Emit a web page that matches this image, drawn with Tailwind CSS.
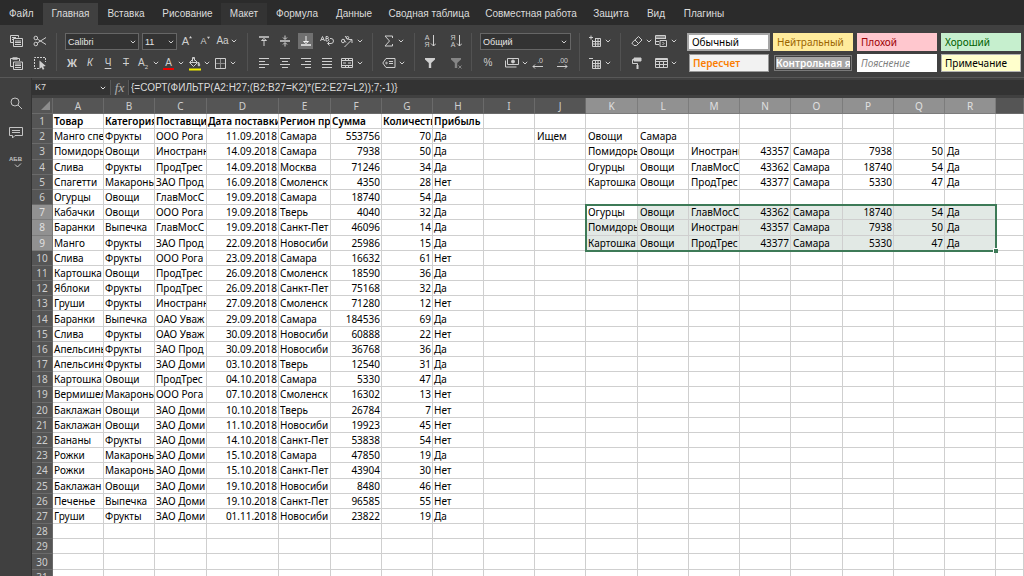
<!DOCTYPE html>
<html lang="ru">
<head>
<meta charset="utf-8">
<meta name="viewport" content="width=device-width, initial-scale=1">
<title>Редактор таблиц</title>
<script src="https://cdn.jsdelivr.net/npm/@tailwindcss/browser@4"></script>
</head>
<body class="flex h-screen flex-col overflow-hidden bg-[#404040] font-['Liberation_Sans',Arial,sans-serif] text-[#dcdcdc]">

<svg class="hidden" aria-hidden="true">
  <symbol id="chev" viewBox="0 0 6 6"><path d="M.8 1.800 3 4l2.200-2.200" fill="none" stroke="currentColor"/></symbol>
</svg>

<nav class="flex h-[25px] shrink-0 items-stretch bg-[#2b2b2b] pt-[3px] text-[10px] leading-[21px] whitespace-nowrap" aria-label="Вкладки">
  <a href="#" class="w-[43px] pl-[9px]">Файл</a>
  <a href="#" aria-current="page" class="w-[55px] bg-[#404040] text-center">Главная</a>
  <a href="#" class="w-[56px] text-center">Вставка</a>
  <a href="#" class="w-[67px] text-center">Рисование</a>
  <a href="#" class="w-[46px] bg-[#333333] text-center">Макет</a>
  <a href="#" class="w-[60px] text-center">Формула</a>
  <a href="#" class="w-[54px] text-center">Данные</a>
  <a href="#" class="w-[96px] text-center">Сводная таблица</a>
  <a href="#" class="w-[108px] text-center">Совместная работа</a>
  <a href="#" class="w-[52px] text-center">Защита</a>
  <a href="#" class="w-[38px] text-center">Вид</a>
  <a href="#" class="w-[58px] text-center">Плагины</a>
</nav>

<div role="toolbar" aria-label="Главная" class="flex h-[53px] shrink-0 border-b border-[#585858] pt-2 text-[#cfcfcf]">
  <!-- clipboard -->
  <div class="ml-1 grid h-[38px] w-[53px] shrink-0 grid-cols-[24px_24px] grid-rows-2 gap-y-[6px] border-r border-[#525252]">
    <button aria-label="Копировать" class="flex items-center justify-center"><svg class="h-[12px] w-[13px]" viewBox="0 0 13 12" fill="none" stroke="currentColor"><path d="M.5.5h8v2M.5.5v7H3M2 2.500h4M2 4.500h1"/><path d="M3.500 3.500h9v8h-9zM5 6h6M5 7.500h6M5 9.500h6"/></svg></button>
    <button aria-label="Вырезать" class="flex items-center justify-center"><svg class="size-[14px]" viewBox="0 0 14 14" fill="none" stroke="currentColor"><circle cx="2.800" cy="4" r="1.800"/><circle cx="2.800" cy="10" r="1.800"/><path d="M4.300 5 13 10.500M4.300 9 13 3.500"/></svg></button>
    <button aria-label="Вставить" class="flex items-center justify-center"><svg class="h-[13px] w-[13px]" viewBox="0 0 13 13" fill="none" stroke="currentColor"><path d="M3.500 9.500h-3v-8h9V4"/><path d="M2.500 1.500h5" stroke-width="2.500"/><path d="M3.500 5h9v7.500h-9zM5 7h6M5 8.500h6M5 10.500h6"/></svg></button>
    <button aria-label="Выделить все" class="flex items-center justify-center"><svg class="size-[14px]" viewBox="0 0 14 14" fill="none" stroke="currentColor"><path d="M6 12.500H1.500v-11h11V6" stroke-dasharray="2 1"/><path d="M6.500 4.500v8.500l2-1.800 1.300 2.600 1.600-.8-1.300-2.600 2.700-.3z" fill="currentColor" stroke="none"/></svg></button>
  </div>
  <!-- font -->
  <div class="flex h-[38px] w-[191px] shrink-0 flex-col gap-[6px] border-r border-[#525252] pl-[6px]">
    <div class="flex h-[16px]">
      <label class="relative ml-[2px] block w-[74px]"><select aria-label="Шрифт" class="block h-[17px] w-full appearance-none border border-[#666] bg-[#333] pl-[2px] text-[9px] leading-[14px] text-[#e6e6e6]"><option>Calibri</option></select><svg class="pointer-events-none absolute top-[6px] right-[3px] size-[6px]"><use href="#chev"/></svg></label>
      <label class="relative ml-[3px] block w-[35px]"><select aria-label="Размер шрифта" class="block h-[17px] w-full appearance-none border border-[#666] bg-[#333] pl-[2px] text-[9px] leading-[14px] text-[#e6e6e6]"><option>11</option></select><svg class="pointer-events-none absolute top-[6px] right-[3px] size-[6px]"><use href="#chev"/></svg></label>
      <button aria-label="Увеличить размер шрифта" class="ml-px flex w-[18px] items-center justify-center"><span class="text-[11px] leading-[16px]">A</span><svg class="mb-[8px] size-[3px]" viewBox="0 0 4 4"><path d="M0 3 2 0l2 3z" fill="currentColor"/></svg></button>
      <button aria-label="Уменьшить размер шрифта" class="flex w-[18px] items-center justify-center"><span class="text-[9px] leading-[16px]">A</span><svg class="mb-[8px] size-[3px]" viewBox="0 0 4 4"><path d="M0 1l2 3 2-3z" fill="currentColor"/></svg></button>
      <button aria-label="Изменить регистр" class="ml-px flex w-[24px] items-center gap-px text-[10px] leading-[16px]"><span class="w-[15px]">Aa</span><svg class="size-[6px]"><use href="#chev"/></svg></button>
    </div>
    <div class="flex h-[16px] items-center text-[10px] leading-[16px]">
      <button aria-label="Полужирный" class="w-[18px] text-center text-[11px] font-bold">Ж</button>
      <button aria-label="Курсив" class="w-[18px] text-center italic">К</button>
      <button aria-label="Подчеркнутый" class="w-[18px] text-center underline underline-offset-2">Ч</button>
      <button aria-label="Зачеркнутый" class="w-[18px] text-center line-through">Т</button>
      <button aria-label="Подстрочные знаки" class="ml-[3px] flex w-[24px] items-center gap-px"><span class="flex w-[14px] items-end">A<span class="text-[6px] leading-[8px]">2</span></span><svg class="size-[6px]"><use href="#chev"/></svg></button>
      <button aria-label="Цвет шрифта" class="ml-px flex w-[25px] items-center gap-[4px]"><span class="block h-[14px] w-[11px] border-b-2 border-[#f00000] text-center leading-[13px]">A</span><svg class="size-[6px]"><use href="#chev"/></svg></button>
      <button aria-label="Цвет заливки" class="flex w-[25px] items-center gap-[3px]"><svg class="h-[15px] w-[13px]" viewBox="0 0 13 15" fill="none" stroke="currentColor"><path d="M5.500 2.500 9.500 6.500 5.500 10.500 1.500 6.500zM2 6.500h7M4.500 5.500v-4h2v3"/><path d="M10.500 6c1.500 2.500 1.500 4 .5 4s-1-1-.5-4z" fill="currentColor"/><path d="M1 13.500h12" stroke="#f4f000" stroke-width="2"/></svg><svg class="size-[6px]"><use href="#chev"/></svg></button>
      <button aria-label="Границы" class="ml-[2px] flex w-[24px] items-center gap-[4px]"><svg class="size-[11px]" viewBox="0 0 11 11" fill="none"><path d="M.5.5h10v10H.500z" stroke="currentColor"/><path d="M5.500 1v9M1 5.500h9" stroke="#8c8c8c"/></svg><svg class="size-[6px]"><use href="#chev"/></svg></button>
    </div>
  </div>
  <!-- alignment -->
  <div class="grid h-[38px] w-[125px] shrink-0 grid-cols-[21px_21px_21px_21px_28px] grid-rows-2 gap-y-[6px] border-r border-[#525252] pl-[5px]">
    <button aria-label="По верхнему краю" class="flex items-center justify-center"><svg class="size-[10px]" viewBox="0 0 10 10" fill="none" stroke="currentColor"><path d="M0 1h10" stroke-width="1.500"/><path d="M2.500 4.500 5 2.500l2.500 2zM5 4v6"/></svg></button>
    <button aria-label="По середине" class="flex items-center justify-center"><svg class="size-[12px]" viewBox="0 0 12 12" fill="none" stroke="currentColor"><path d="M1 6h10" stroke-width="1.500"/><path d="M6 .5V4M6 8v3.500M4 2.500l2 2 2-2M4 9.500l2-2 2 2"/></svg></button>
    <button aria-label="По нижнему краю" aria-pressed="true" class="mx-[3px] flex items-center justify-center bg-[#707070] text-[#f0f0f0]"><svg class="size-[10px]" viewBox="0 0 10 10" fill="none" stroke="currentColor"><path d="M0 9h10" stroke-width="1.500"/><path d="M2.500 5.500 5 7.500l2.500-2zM5 0v6"/></svg></button>
    <button aria-label="Перенос текста" class="flex items-center justify-center"><svg class="size-[14px]" viewBox="0 0 14 14" fill="none" stroke="currentColor"><path d="M.5 7 2.500 2.500 4.500 7M1.200 5.500h2.600M6 2.500V7h1.500a1 1 0 0 0 0-2.500H6h1.300a.9.900 0 0 0 0-2zM10 4.500h1a2.500 2.500 0 0 1 0 5H8M9.500 7.500l-2 2 2 2"/></svg></button>
    <button aria-label="Ориентация" class="flex items-center gap-[4px] pl-[3px]"><svg class="size-[13px]" viewBox="0 0 13 13" fill="none" stroke="currentColor"><path d="m4.500 12 7-7M8.500 4.500H12V8"/><ellipse cx="3" cy="6" rx="1.500" ry="1.800"/><path d="m3.500 4 2.500 3.500M5 1l3 3.500"/><circle cx="7.500" cy="2.800" r="1.300"/></svg><svg class="size-[6px]"><use href="#chev"/></svg></button>
    <button aria-label="По левому краю" class="flex items-center justify-center"><svg class="size-[10px]" viewBox="0 0 10 10" stroke="currentColor"><path d="M0 .5h10M0 3.500h6M0 6.500h10M0 9.500h6"/></svg></button>
    <button aria-label="По центру" class="flex items-center justify-center"><svg class="size-[10px]" viewBox="0 0 10 10" stroke="currentColor"><path d="M0 .5h10M2 3.500h6M0 6.500h10M2 9.500h6"/></svg></button>
    <button aria-label="По правому краю" class="flex items-center justify-center"><svg class="size-[10px]" viewBox="0 0 10 10" stroke="currentColor"><path d="M0 .5h10M4 3.500h6M0 6.500h10M4 9.500h6"/></svg></button>
    <button aria-label="По ширине" class="flex items-center justify-center"><svg class="size-[10px]" viewBox="0 0 10 10" stroke="currentColor"><path d="M0 .5h10M0 3.500h10M0 6.500h10M0 9.500h10"/></svg></button>
    <button aria-label="Объединить ячейки" class="flex items-center gap-[4px] pl-[4px]"><svg class="h-[10px] w-[12px]" viewBox="0 0 12 10" fill="none" stroke="currentColor"><path d="M.5.5h11v9H.500zM.5 2.500h11M.5 7.500h11M4.500.5v2M7.500.5v2M4.500 7.500v2M7.500 7.500v2M2 5h3M7 5h3"/></svg><svg class="size-[6px]"><use href="#chev"/></svg></button>
  </div>
  <!-- functions -->
  <div class="grid h-[38px] w-[42px] shrink-0 grid-rows-2 gap-y-[6px] border-r border-[#525252] pl-[9px]">
    <button aria-label="Сумма" class="flex items-center gap-[3px]"><svg class="h-[12px] w-[13px]" viewBox="0 0 13 12" fill="none" stroke="currentColor"><path d="M10.500 3V1H3l4.500 5L3 11h7.500V9"/></svg><svg class="size-[6px]"><use href="#chev"/></svg></button>
    <button aria-label="Именованные диапазоны" class="flex items-center gap-[3px]"><svg class="h-[10px] w-[14px]" viewBox="0 0 14 10" fill="none" stroke="currentColor"><path d="M4 .5h9v9H4L.8 5zM7 3.500h4M7 5.500h4"/><circle cx="4.500" cy="5" r=".8"/></svg><svg class="size-[6px]"><use href="#chev"/></svg></button>
  </div>
  <!-- sorting -->
  <div class="grid h-[38px] w-[57px] shrink-0 grid-cols-[26px_26px] grid-rows-2 gap-y-[6px] border-r border-[#525252] pl-[2px]">
    <button aria-label="Сортировка по возрастанию" class="flex items-center justify-center"><span class="flex w-[6px] flex-col text-[7px] leading-[7px]"><span>А</span><span>Я</span></span><svg class="h-[14px] w-[6px]" viewBox="0 0 6 14" fill="none" stroke="currentColor"><path d="M3.500 1v11M1 9.500 3.500 12 6 9.500"/></svg></button>
    <button aria-label="Сортировка по убыванию" class="flex items-center justify-center"><span class="flex w-[6px] flex-col text-[7px] leading-[7px]"><span>Я</span><span>А</span></span><svg class="h-[14px] w-[6px]" viewBox="0 0 6 14" fill="none" stroke="currentColor"><path d="M3.500 1v11M1 9.500 3.500 12 6 9.500"/></svg></button>
    <button aria-label="Фильтр" class="flex items-center justify-center"><svg class="size-[10px]" viewBox="0 0 10 10" fill="currentColor"><path d="M0 0h10v1.500L6.200 5v5H3.800V5L0 1.500z"/></svg></button>
    <button aria-label="Очистить фильтр" class="flex items-center justify-center text-[#858585]"><svg class="size-[11px]" viewBox="0 0 11 11" fill="currentColor"><path d="M0 0h10v1.500L6.200 5v5H3.800V5L0 1.500z"/><path d="m7.500 7.500 3 3m0-3-3 3" stroke="currentColor"/></svg></button>
  </div>
  <!-- number format -->
  <div class="flex h-[38px] w-[108px] shrink-0 flex-col gap-[6px] border-r border-[#525252] pl-[3px]">
    <label class="relative ml-[5px] block h-[16px] w-[91px]"><select aria-label="Числовой формат" class="block h-[17px] w-full appearance-none border border-[#666] bg-[#333] pl-[2px] text-[9px] leading-[14px] text-[#e6e6e6]"><option>Общий</option></select><svg class="pointer-events-none absolute top-[6px] right-[4px] size-[6px]"><use href="#chev"/></svg></label>
    <div class="flex h-[16px] items-center">
      <button aria-label="Процентный формат" class="w-[26px] text-center text-[10px] leading-[16px]">%</button>
      <button aria-label="Финансовый формат" class="ml-[4px] flex w-[25px] items-center gap-[3px]"><svg class="h-[10px] w-[14px]" viewBox="0 0 14 10" fill="none" stroke="currentColor"><path d="M2.500.5h11v6h-11zM.5 2.500v6.500h11"/><circle cx="8" cy="3.500" r="1.500" fill="currentColor"/></svg><svg class="size-[6px]"><use href="#chev"/></svg></button>
      <button aria-label="Уменьшить разрядность" class="flex w-[13px] flex-col items-end"><span class="text-[7px] leading-[7px]">.0</span><svg class="h-[5px] w-[11px]" viewBox="0 0 11 5" fill="none" stroke="currentColor"><path d="M1 2.500h10M3 .5l-2 2 2 2"/></svg></button>
      <button aria-label="Увеличить разрядность" class="ml-[8px] flex w-[17px] flex-col items-end"><span class="text-[7px] leading-[7px]">.00</span><svg class="h-[5px] w-[11px]" viewBox="0 0 11 5" fill="none" stroke="currentColor"><path d="M0 2.500h10M8 .5l2 2-2 2"/></svg></button>
    </div>
  </div>
  <!-- cells -->
  <div class="grid h-[38px] w-[41px] shrink-0 grid-rows-2 gap-y-[6px] border-r border-[#525252] pl-[9px]">
    <button aria-label="Вставить ячейки" class="flex items-center gap-[4px]"><svg class="size-[12px]" viewBox="0 0 12 12" fill="none" stroke="currentColor"><path d="M0 2.500h4M2 .5v4M3.500 5v6.500h8v-8H6M3.500 6.500h8M3.500 9h8M6.500 3.500v8M9 3.500v8"/></svg><svg class="size-[6px]"><use href="#chev"/></svg></button>
    <button aria-label="Удалить ячейки" class="flex items-center gap-[4px]"><svg class="size-[12px]" viewBox="0 0 12 12" fill="none" stroke="currentColor"><path d="M0 1.500h4M3.500 4v7.500h8v-8h-8M3.500 6.500h8M3.500 9h8M6.500 3.500v8M9 3.500v8"/></svg><svg class="size-[6px]"><use href="#chev"/></svg></button>
  </div>
  <!-- editing -->
  <div class="grid h-[38px] w-[66px] shrink-0 grid-cols-[24px_24px] grid-rows-2 gap-y-[6px] pl-[10px]">
    <button aria-label="Очистить" class="flex items-center gap-[3px]"><svg class="h-[12px] w-[12px]" viewBox="0 0 12 12" fill="none" stroke="currentColor"><path d="M7.500 1.500 11 5 5.500 10.500H3L.8 8zM4 5l3.500 3.500"/></svg><svg class="size-[6px]"><use href="#chev"/></svg></button>
    <button aria-label="Условное форматирование" class="flex items-center gap-[4px]"><svg class="size-[12px] shrink-0" viewBox="0 0 12 12" fill="none" stroke="currentColor"><path d="M4 9.500H.500v-9h10V4M.5 3.500h10M.5 6.500H4"/><path d="M1 1h9v2H1z" fill="currentColor" stroke="none" opacity=".5"/><path d="M5 5.500h6.500v6H5zM7.500 7l1.500 1.500L7.500 10"/></svg><svg class="size-[6px] shrink-0"><use href="#chev"/></svg></button>
    <button aria-label="Копировать стиль" class="flex items-center"><svg class="h-[12px] w-[12px]" viewBox="0 0 12 12" fill="none" stroke="currentColor"><path d="M3 1h7v3H3z" fill="currentColor"/><path d="M3 2.500H1.500v4h5V8"/><path d="M6.500 8v4" stroke-width="2"/></svg></button>
    <button aria-label="Форматировать как таблицу" class="flex items-center gap-[3px]"><svg class="h-[10px] w-[13px] shrink-0" viewBox="0 0 13 10" fill="none" stroke="currentColor"><path d="M.5.5h12v9H.500zM.5 3.500h12M.5 6.500h12M4.500 3v7M8.500 3v7"/><path d="M1 1h11" stroke-width="2"/></svg><svg class="size-[6px] shrink-0"><use href="#chev"/></svg></button>
  </div>
  <!-- cell styles -->
  <div class="grid h-[39px] flex-1 grid-cols-[repeat(4,84px)] grid-rows-[18px_18px] gap-y-[3px] overflow-hidden pr-[2px] font-['Noto_Sans',sans-serif] text-[10px] leading-[16px] whitespace-nowrap">
    <button class="mr-px flex items-center overflow-hidden border-2 border-[#a6a6a6] bg-white pl-[3px] text-black">Обычный</button>
    <button class="mx-[2px] flex items-center overflow-hidden bg-[#ffeb9c] pl-1 text-[#9c6500]">Нейтральный</button>
    <button class="mx-[2px] flex items-center overflow-hidden bg-[#ffc7ce] pl-1 text-[#9c0006]">Плохой</button>
    <button class="mx-[2px] flex items-center overflow-hidden bg-[#c6efce] pl-1 text-[#006100]">Хороший</button>
    <button class="mx-[2px] flex items-center overflow-hidden border border-[#999] bg-[#f2f2f2] pl-[3px] font-semibold text-[#fa7d00]">Пересчет</button>
    <button class="mx-[3px] my-px flex items-center overflow-hidden border border-[#7a7a7a] p-px leading-[12px] font-semibold text-white"><span class="block w-full overflow-hidden bg-[#a5a5a5] text-left">Контрольная я</span></button>
    <button class="mx-[2px] flex items-center overflow-hidden bg-white pl-1 text-[#7f7f7f] italic">Пояснение</button>
    <button class="mx-[2px] flex items-center overflow-hidden border border-[#b2b2b2] bg-[#ffffcc] pl-[3px] text-black">Примечание</button>
  </div>
</div>

<div class="flex min-h-0 flex-1">
  <aside class="flex w-[32px] shrink-0 flex-col items-center gap-4 border-r border-[#333] pt-[18px] text-[#c4c4c4]">
    <button aria-label="Поиск"><svg class="size-[14px]" viewBox="0 0 14 14" fill="none" stroke="currentColor"><circle cx="6" cy="6" r="4"/><path d="m9 9 4 4"/></svg></button>
    <button aria-label="Комментарии"><svg class="size-[14px]" viewBox="0 0 14 14" fill="none" stroke="currentColor"><path d="M.5 1.500h13v8H6l-2.500 2.500V9.500h-3zM3 4.500h8M3 6.500h8"/></svg></button>
    <button aria-label="Проверка орфографии" class="flex flex-col items-end"><span class="text-[6px] leading-[7px] font-bold">АБВ</span><svg class="h-[5px] w-[8px]" viewBox="0 0 8 5" fill="none" stroke="currentColor"><path d="M1 1.500 3.500 4 7 .5"/></svg></button>
  </aside>

  <div class="flex min-w-0 flex-1 flex-col">
    <div class="mt-[2px] flex h-[15px] shrink-0 bg-[#333] text-[10px] leading-[15px]">
      <input aria-label="Имя ячейки" value="K7" class="h-[15px] w-[66px] pl-[3px] text-[9px] leading-[15px]">
      <button aria-label="Список имен" class="flex w-[13px] items-center justify-start border-r border-[#585858] pl-[2px]"><svg class="size-[6px]"><use href="#chev"/></svg></button>
      <button aria-label="Вставить функцию" class="w-[18px] border-r border-[#585858] bg-[#404040] text-center font-['Liberation_Serif',serif] text-[13px] leading-[14px] text-[#b0b0b0] italic">fx</button>
      <input aria-label="Строка формул" value="{=СОРТ(ФИЛЬТР(A2:H27;(B2:B27=K2)*(E2:E27=L2));7;-1)}" class="h-[15px] flex-1 pl-[2px] text-[10px] leading-[15px]">
    </div>
    <div class="relative mt-[3px] min-h-0 flex-1 overflow-hidden bg-white">
      <table class="h-[487px] w-full table-fixed border-separate border-spacing-0 font-['Noto_Sans',sans-serif] text-[10px] leading-[13px] text-black">
        <colgroup>
          <col class="w-[21px]"><col class="w-[51px]"><col class="w-[51px]"><col class="w-[52px]"><col class="w-[72px]"><col class="w-[52px]"><col class="w-[51px]"><col class="w-[51px]"><col class="w-[51px]"><col class="w-[51px]"><col class="w-[51px]"><col class="w-[52px]"><col class="w-[51px]"><col class="w-[51px]"><col class="w-[51px]"><col class="w-[52px]"><col class="w-[51px]"><col class="w-[51px]"><col class="w-[51px]"><col>
        </colgroup>
        <thead id="head"></thead>
        <tbody id="body"></tbody>
      </table>
      <!-- selection K7:R9 -->
      <div class="pointer-events-none absolute top-[106px] left-[553px] h-[48px] w-[412px] border-2 border-[#3d7a57]">
        <div class="absolute -right-[3px] -bottom-[3px] size-[5px] border-t border-l border-white bg-[#3d7a57]"></div>
      </div>
    </div>
  </div>
</div>

<script>
const rows = `Товар|Категория|Поставщи|Дата поставки|Регион пр|Сумма|Количеств|Прибыль
Манго спе|Фрукты|ООО Рога|11.09.2018|Самара|553756|70|Да
Помидоры|Овощи|Иностранн|14.09.2018|Самара|7938|50|Да
Слива|Фрукты|ПродТрес|14.09.2018|Москва|71246|34|Да
Спагетти|Макароны|ЗАО Прод|16.09.2018|Смоленск|4350|28|Нет
Огурцы|Овощи|ГлавМосС|19.09.2018|Самара|18740|54|Да
Кабачки|Овощи|ООО Рога|19.09.2018|Тверь|4040|32|Да
Баранки|Выпечка|ГлавМосС|19.09.2018|Санкт-Пет|46096|14|Да
Манго|Фрукты|ЗАО Прод|22.09.2018|Новосиби|25986|15|Да
Слива|Фрукты|ООО Рога|23.09.2018|Самара|16632|61|Нет
Картошка|Овощи|ПродТрес|26.09.2018|Смоленск|18590|36|Да
Яблоки|Фрукты|ПродТрес|26.09.2018|Санкт-Пет|75168|32|Да
Груши|Фрукты|Иностранн|27.09.2018|Смоленск|71280|12|Нет
Баранки|Выпечка|ОАО Уваж|29.09.2018|Самара|184536|69|Да
Слива|Фрукты|ОАО Уваж|30.09.2018|Новосиби|60888|22|Нет
Апельсины|Фрукты|ЗАО Прод|30.09.2018|Новосиби|36768|36|Да
Апельсины|Фрукты|ЗАО Доми|03.10.2018|Тверь|12540|31|Да
Картошка|Овощи|ПродТрес|04.10.2018|Самара|5330|47|Да
Вермишел|Макароны|ООО Рога|07.10.2018|Смоленск|16302|13|Нет
Баклажан|Овощи|ЗАО Доми|10.10.2018|Тверь|26784|7|Нет
Баклажан|Овощи|ЗАО Доми|11.10.2018|Новосиби|19923|45|Нет
Бананы|Фрукты|ЗАО Доми|14.10.2018|Санкт-Пет|53838|54|Нет
Рожки|Макароны|ЗАО Доми|15.10.2018|Самара|47850|19|Да
Рожки|Макароны|ЗАО Доми|15.10.2018|Санкт-Пет|43904|30|Нет
Баклажан|Овощи|ЗАО Доми|19.10.2018|Новосиби|8480|46|Нет
Печенье|Выпечка|ЗАО Доми|19.10.2018|Санкт-Пет|96585|55|Нет
Груши|Фрукты|ЗАО Доми|01.11.2018|Новосиби|23822|19|Да`.split('\n').map(line => line.split('|'));

const tomato = ['Помидоры', 'Овощи', 'Иностранн', '43357', 'Самара', '7938', '50', 'Да'];
const cucumber = ['Огурцы', 'Овощи', 'ГлавМосС', '43362', 'Самара', '18740', '54', 'Да'];
const potato = ['Картошка', 'Овощи', 'ПродТрес', '43377', 'Самара', '5330', '47', 'Да'];
const side = { 2: ['Овощи', 'Самара'], 3: tomato, 4: cucumber, 5: potato, 7: cucumber, 8: tomato, 9: potato };

const cols = 'ABCDEFGHIJKLMNOPQRS'.split('');
const headBase = 'overflow-hidden border-r border-b px-0 pt-px pb-0 text-center font-normal';
document.getElementById('head').innerHTML =
  '<tr class="h-[16px]"><th class="border-r border-b border-[#6a6a6a] bg-[#555] p-0"><svg class="ml-[9px] size-[9px]" viewBox="0 0 9 9"><path d="M9 0v9H0z" fill="#8c8c8c"/></svg></th>' +
  cols.map((c, i) => i >= 10 && i <= 17
    ? `<th scope="col" class="${headBase} border-[#7c7c7c] bg-[#919191] text-[#e0e0e0]">${c}</th>`
    : `<th scope="col" class="${headBase} border-[#6a6a6a] bg-[#555] text-[#cfcfcf]">${i < 18 ? c : ''}</th>`).join('') + '</tr>';

let html = '';
for (let r = 1; r <= 31; r++) {
  const active = r >= 7 && r <= 9;
  html += `<tr><th scope="row" class="${headBase} ${active ? 'border-[#7c7c7c] bg-[#919191] text-[#e0e0e0]' : 'border-[#6a6a6a] bg-[#555] text-[#cfcfcf]'}">${r}</th>`;
  for (let c = 0; c < 19; c++) {
    let text = '';
    if (c < 8 && rows[r - 1]) text = rows[r - 1][c];
    else if (c === 9 && r === 2) text = 'Ищем';
    else if (c >= 10 && side[r]) text = side[r][c - 10] || '';
    const numeric = /^[\d.]+$/.test(text);
    const shaded = active && c >= 10 && c <= 17 && !(r === 7 && c === 10);
    html += `<td class="overflow-hidden border-r border-b border-[#cfcfcf] pt-px pb-0 whitespace-nowrap ${numeric ? 'pr-px pl-0 text-right' : 'text-left'} ${!numeric && c >= 9 ? 'pr-0 pl-[2px]' : ''} ${!numeric && c < 9 ? 'pr-0 pl-px' : ''} ${r === 1 ? 'font-semibold' : 'font-normal'} ${shaded ? 'bg-[#e2e9e5]' : 'bg-white'}">${text}</td>`;
  }
  html += '</tr>';
}
document.getElementById('body').innerHTML = html;
</script>
</body>
</html>
